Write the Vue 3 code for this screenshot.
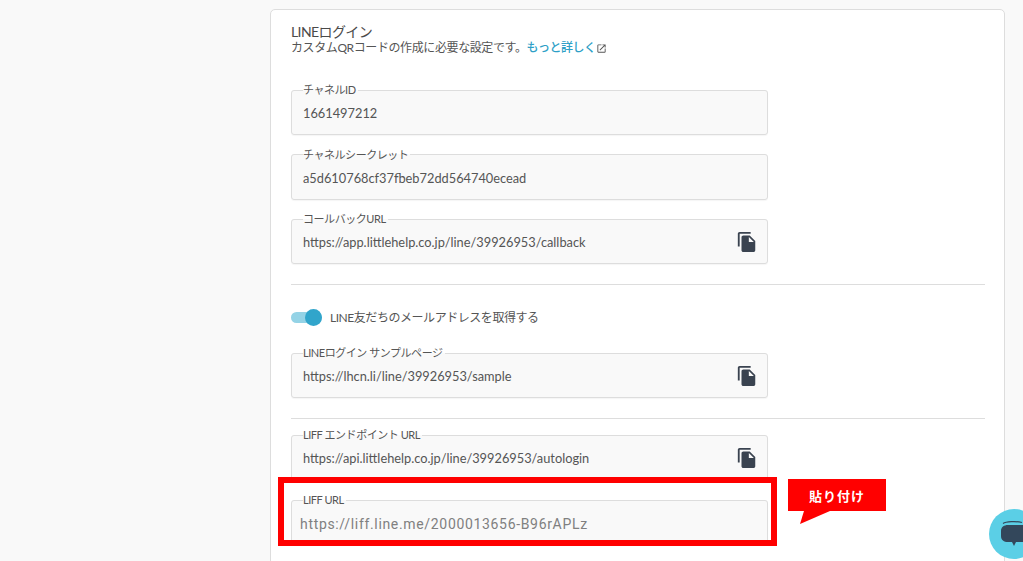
<script setup>
const copyPath = 'M16 1H4c-1.1 0-2 .9-2 2v14h2V3h12V1zm-1 4 6 6v10c0 1.1-.9 2-2 2H7.99C6.89 23 6 22.1 6 21l.01-14c0-1.1.89-2 1.99-2h7zm-1 7h5.5L14 6.5V12z'
const top = [
  { label: 'チャネルID', value: '1661497212' },
  { label: 'チャネルシークレット', value: 'a5d610768cf37fbeb72dd564740ecead' },
  { label: 'コールバックURL', value: 'https://app.littlehelp.co.jp/line/39926953/callback', copy: true }
]
</script>

<template>
  <div class="page">
    <section class="card">
      <h2 class="title">LINEログイン</h2>
      <p class="sub">
        カスタムQRコードの作成に必要な設定です。<a class="more">もっと詳しく</a><svg class="ext" viewBox="0 0 24 24"><path d="M19 19H5V5h7V3H5c-1.11 0-2 .9-2 2v14c0 1.1.89 2 2 2h14c1.1 0 2-.9 2-2v-7h-2v7zM14 3v2h3.59l-9.83 9.83 1.41 1.41L19 6.41V10h2V3h-7z" /></svg>
      </p>

      <div class="group first">
        <fieldset v-for="f in top" :key="f.label" class="field">
          <legend>{{ f.label }}</legend>
          <div class="value">{{ f.value }}</div>
          <svg v-if="f.copy" class="copy" viewBox="0 0 24 24"><path :d="copyPath" /></svg>
        </fieldset>
      </div>

      <hr class="rule rule-a" />

      <div class="switch-row">
        <span class="switch"><span class="knob"></span></span>
        <span class="switch-label">LINE友だちのメールアドレスを取得する</span>
      </div>

      <fieldset class="field sample">
        <legend>LINEログイン サンプルページ</legend>
        <div class="value">https://lhcn.li/line/39926953/sample</div>
        <svg class="copy" viewBox="0 0 24 24"><path :d="copyPath" /></svg>
      </fieldset>

      <hr class="rule rule-b" />

      <fieldset class="field endpoint">
        <legend>LIFF エンドポイント URL</legend>
        <div class="value">https://api.littlehelp.co.jp/line/39926953/autologin</div>
        <svg class="copy" viewBox="0 0 24 24"><path :d="copyPath" /></svg>
      </fieldset>

      <fieldset class="field liff">
        <legend>LIFF URL</legend>
        <div class="value pasted">https://liff.line.me/2000013656-B96rAPLz</div>
      </fieldset>
    </section>

    <div class="highlight"></div>
    <div class="tag">
      <span>貼り付け</span>
      <svg class="tail" viewBox="0 0 32 14"><polygon points="4,0 0,13 30,0" /></svg>
    </div>

    <button class="chat" aria-label="chat">
      <svg viewBox="0 0 28 28" class="chat-icon">
        <path class="arc" d="M3 3.5C6 1.5 16 1 22 2.5" />
        <path d="M8 5h14c4 0 6 2 6 6v5c0 4-2 6-6 6h-6l-2 4-2-4H8c-4 0-7-2-7-6v-5c0-4 3-6 7-6z" />
      </svg>
    </button>
  </div>
</template>

<style scoped>
.page {
  position: relative;
  height: 561px;
  overflow: hidden;
  background: #f9f9f9;
  padding: 9px 18px 0 270px;
  box-sizing: border-box;
  font-family: Lato, "Noto Sans CJK JP", sans-serif;
  color: #555;
}
.card {
  box-sizing: border-box;
  width: 735px;
  height: 600px;
  background: #fff;
  border: 1px solid #ddd;
  border-radius: 5px;
  padding: 14px 19px 0 20px;
}
.title {
  margin: 0;
  font-size: 14px;
  line-height: 16px;
  font-weight: 400;
  letter-spacing: -0.6px;
  color: #4a4a4a;
}
.sub {
  margin: 0;
  font-size: 12px;
  line-height: 16px;
  letter-spacing: -0.4px;
  display: flex;
  align-items: center;
}
.more {
  color: #2e9fc7;
  font-weight: 500;
  letter-spacing: -0.5px;
}
.ext {
  width: 11px;
  height: 11px;
  margin-left: 0;
  fill: #555;
}
.group {
  display: flex;
  flex-direction: column;
  gap: 12.5px;
}
.first {
  margin-top: 27px;
}
.field {
  box-sizing: border-box;
  position: relative;
  display: block;
  width: 477px;
  height: 52px;
  margin: 0;
  padding: 0 11px;
  min-width: 0;
  background: #f9f9f9;
  border: 1px solid #ddd;
  border-radius: 3px;
  box-shadow: 0 1px 1px rgba(0, 0, 0, 0.04);
}
legend {
  padding: 0 2px 0 0;
  font-size: 11px;
  line-height: 14px;
  letter-spacing: -0.45px;
  color: #555;
}
.value {
  padding-top: 7px;
  font-size: 12.8px;
  line-height: 18px;
  color: #555;
}
.pasted {
  margin-left: -3px;
  padding-top: 8px;
  font-family: Roboto, sans-serif;
  font-size: 14px;
  letter-spacing: 0.67px;
  color: #808080;
}
.copy {
  position: absolute;
  right: 9px;
  top: 5px;
  width: 22px;
  height: 22px;
  fill: #3a4350;
}
.rule {
  margin: 0;
  border: 0;
  border-top: 1px solid #ddd;
}
.rule-a {
  margin-top: 20px;
}
.switch-row {
  display: flex;
  align-items: center;
  height: 16px;
  margin-top: 24px;
}
.switch {
  position: relative;
  display: block;
  width: 31px;
  height: 11px;
  background: #94d3e6;
  border-radius: 6px;
}
.knob {
  position: absolute;
  right: 0;
  top: -3px;
  width: 17px;
  height: 17px;
  border-radius: 50%;
  background: #31a5cb;
}
.switch-label {
  margin-left: 8px;
  padding-bottom: 2px;
  font-size: 12px;
  letter-spacing: -0.45px;
  color: #555;
}
.sample {
  margin-top: 21px;
}
.rule-b {
  margin-top: 20px;
}
.endpoint {
  margin-top: 9px;
}
.liff {
  margin-top: 13px;
}
.highlight {
  position: absolute;
  left: 278px;
  top: 477px;
  box-sizing: border-box;
  width: 499px;
  height: 69px;
  border: 6px solid #f00;
}
.tag {
  position: absolute;
  left: 788px;
  top: 479px;
  width: 98px;
  height: 32px;
  background: #f00;
  color: #fff;
  display: flex;
  align-items: center;
  justify-content: center;
  font-size: 13px;
  font-weight: 700;
  letter-spacing: 1px;
}
.tail {
  position: absolute;
  left: 12px;
  top: 32px;
  width: 32px;
  height: 14px;
  fill: #f00;
}
.chat {
  position: absolute;
  left: 989px;
  top: 509px;
  width: 50px;
  height: 50px;
  padding: 0;
  border: 0;
  border-radius: 50%;
  background: #5bcfe6;
}
.chat-icon {
  position: absolute;
  left: 11px;
  top: 11px;
  width: 28px;
  height: 28px;
  fill: #33475b;
}
.arc {
  fill: none;
  stroke: #33475b;
  stroke-width: 1.2;
}
</style>
